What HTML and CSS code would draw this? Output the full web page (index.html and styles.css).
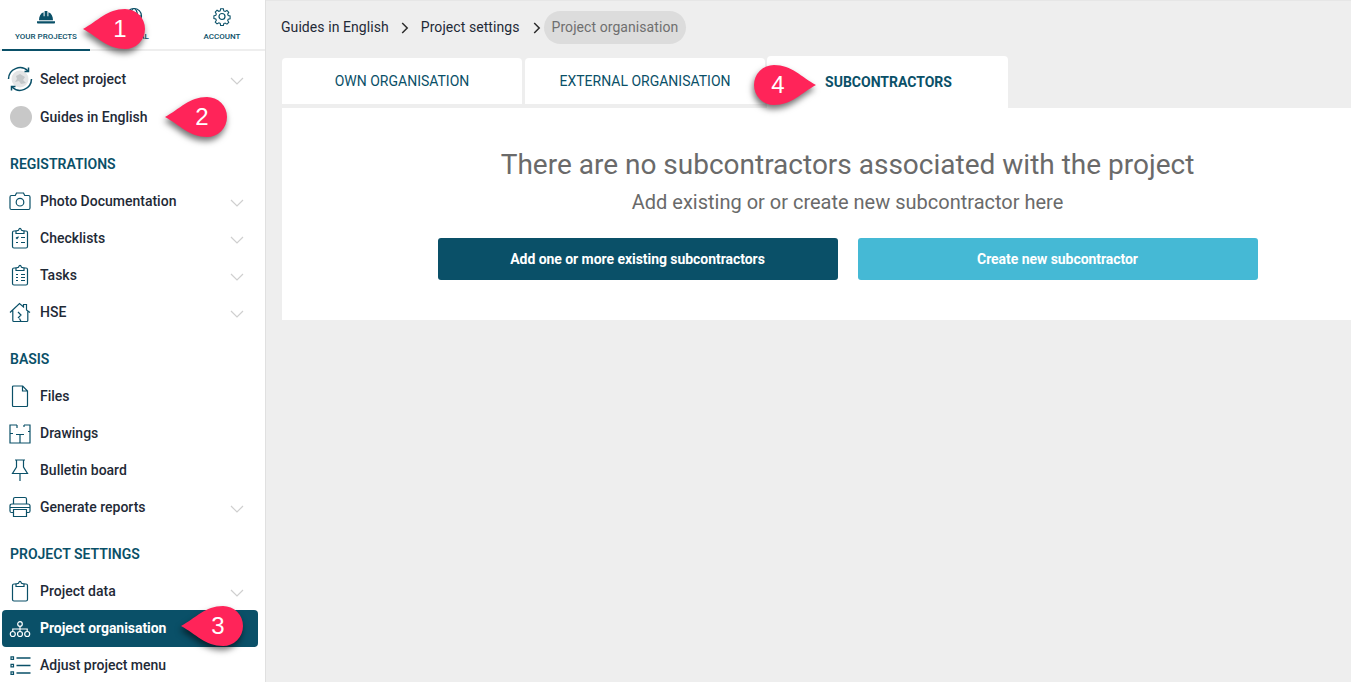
FILE: index.html
```html
<!DOCTYPE html>
<html lang="en">
<head>
<meta charset="utf-8">
<title>Project organisation</title>
<link rel="stylesheet" href="styles.css">
</head>
<body>
<div class="app">
  <aside class="sidebar">
    <div class="top-tabs">
      <div class="top-tab active">
        <svg class="top-icon" viewBox="0 0 20 20"><path class="fill" d="M1 15.2h18v1.6q0 .7-.8.7H1.800q-.8 0-.8-.7zM3 14.200c0-4 1.500-7 4.600-8v4h1V5h2.800v5.200h1v-4c3.100 1 4.600 4 4.600 8z"/></svg>
        <span>YOUR PROJECTS</span>
      </div>
      <div class="top-tab">
        <svg class="top-icon" viewBox="0 0 20 20"><circle class="line" cx="10" cy="10" r="7.500"/><ellipse class="line" cx="10" cy="10" rx="3.500" ry="7.500"/><path class="line" d="M2.500 10h15"/></svg>
        <span>GLOBAL</span>
      </div>
      <div class="top-tab">
        <svg class="top-icon" viewBox="0 0 20 20"><path class="line" d="M8.500 2h3l.5 2.300 1.500.7 2-1.200 2 2.100-1.200 2 .6 1.500 2.100.6v3l-2.100.5-.6 1.500 1.200 2-2 2-2-1.200-1.500.6-.5 2.300h-3L8 18.200l-1.500-.6-2 1.200-2-2 1.200-2-.6-1.500-2.100-.5v-3l2.100-.6.6-1.500-1.200-2 2-2.100 2 1.200L8 4.300z" transform="translate(1 1) scale(.9)"/><circle class="line" cx="10" cy="10.500" r="3"/></svg>
        <span>ACCOUNT</span>
      </div>
    </div>

    <nav class="menu">
      <div class="item item-first">
        <svg class="icon" viewBox="0 0 26 26"><circle class="photo" cx="13" cy="13" r="8.500"/><path class="speck" d="M9 10l4-2 5 3-2 3 3 3-5 1-2-3-4 1 2-3z"/><path class="line thick" d="M1.500 13A11.500 11.500 0 0 1 21 5M24.500 13A11.500 11.500 0 0 1 5 21"/><path class="line thick" d="M21.500 1.500V5.500h-4M4.500 24.500V20.500h4"/></svg>
        <span class="label">Select project</span>
        <svg class="chev" viewBox="0 0 14 8"><path d="M1 1l6 6 6-6"/></svg>
      </div>
      <div class="item">
        <span class="avatar"></span>
        <span class="label">Guides in English</span>
      </div>

      <h2 class="section">REGISTRATIONS</h2>
      <div class="item">
        <svg class="icon" viewBox="0 0 22 22"><path class="line" d="M2.500 5.500h3.800L7.500 3h7l1.200 2.500h3.800q1.500 0 1.500 1.500v11q0 1.500-1.500 1.500h-17Q1 19.500 1 18V7q0-1.500 1.500-1.500z"/><circle class="line" cx="11" cy="12.200" r="3.800"/></svg>
        <span class="label">Photo Documentation</span>
        <svg class="chev" viewBox="0 0 14 8"><path d="M1 1l6 6 6-6"/></svg>
      </div>
      <div class="item">
        <svg class="icon" viewBox="0 0 22 22"><path class="line" d="M7 4H5q-1.500 0-1.500 1.500v14Q3.500 21 5 21h12q1.500 0 1.500-1.500v-14Q18.500 4 17 4h-2"/><path class="line" d="M7 6.500V4l2.500-.8Q11-.5 12.500 3.200L15 4v2.500z"/><path class="line" d="M7 10.500l1 1 1.500-1.800M12 10.500h4M7 15.500h2M12 15.500h4"/></svg>
        <span class="label">Checklists</span>
        <svg class="chev" viewBox="0 0 14 8"><path d="M1 1l6 6 6-6"/></svg>
      </div>
      <div class="item">
        <svg class="icon" viewBox="0 0 22 22"><path class="line" d="M7 4H5q-1.500 0-1.500 1.500v14Q3.500 21 5 21h12q1.500 0 1.500-1.500v-14Q18.500 4 17 4h-2"/><path class="line" d="M7 6.500V4l2.500-.8Q11-.5 12.500 3.200L15 4v2.500z"/><path class="line" d="M7 10.500h2M12 10.500h4M7 13.500h2M12 13.500h4M7 16.500h2M12 16.500h4"/></svg>
        <span class="label">Tasks</span>
        <svg class="chev" viewBox="0 0 14 8"><path d="M1 1l6 6 6-6"/></svg>
      </div>
      <div class="item">
        <svg class="icon" viewBox="0 0 22 22"><path class="line" d="M1 11.500L10.500 2.500l4 3.500V3.500h3V9l3.500 2.500M3.800 9.500v10q0 1 1 1h13q1 0 1-1v-10M9 11l3 3-3 3M10.500 17.500l1.500 3"/></svg>
        <span class="label">HSE</span>
        <svg class="chev" viewBox="0 0 14 8"><path d="M1 1l6 6 6-6"/></svg>
      </div>

      <h2 class="section">BASIS</h2>
      <div class="item">
        <svg class="icon" viewBox="0 0 22 22"><path class="line" d="M4.500 1h9.200L18.500 6v14.500q0 1-1 1h-13q-1 0-1-1V2q0-1 1-1zM13.500 1v5h5"/></svg>
        <span class="label">Files</span>
      </div>
      <div class="item">
        <svg class="icon" viewBox="0 0 22 22"><path class="line" d="M8 3H1v18h20V3h-6M21 9.500h-2M1 11.500h3M7 12.500h8M11 12.500V21M8 3v3M15 3v2"/></svg>
        <span class="label">Drawings</span>
      </div>
      <div class="item">
        <svg class="icon" viewBox="0 0 22 22"><path class="line" d="M6 1h10M7.500 1v7L3.500 14.500h15L14.500 8V1M11 14.500V22"/></svg>
        <span class="label">Bulletin board</span>
      </div>
      <div class="item">
        <svg class="icon" viewBox="0 0 22 22"><path class="line" d="M4.500 8V3q0-1.500 1.500-1.500h10q1.500 0 1.500 1.500v5M4 16.500H2.500Q1 16.500 1 15v-5q0-2 2-2h16q2 0 2 2v5q0 1.500-1.500 1.500H18M4.500 13.500h13v7h-13zM1 11.500h20"/></svg>
        <span class="label">Generate reports</span>
        <svg class="chev" viewBox="0 0 14 8"><path d="M1 1l6 6 6-6"/></svg>
      </div>

      <h2 class="section">PROJECT SETTINGS</h2>
      <div class="item">
        <svg class="icon" viewBox="0 0 22 22"><path class="line" d="M7 4H5q-1.500 0-1.500 1.500v14Q3.500 21 5 21h12q1.500 0 1.500-1.500v-14Q18.500 4 17 4h-2"/><path class="line" d="M7 6.500V4l2.500-.8Q11-.5 12.500 3.200L15 4v2.500z"/></svg>
        <span class="label">Project data</span>
        <svg class="chev" viewBox="0 0 14 8"><path d="M1 1l6 6 6-6"/></svg>
      </div>
      <div class="item selected">
        <svg class="icon" viewBox="0 0 22 22"><circle class="line" cx="11" cy="7" r="2.300"/><circle class="line" cx="3.800" cy="17" r="2.500"/><circle class="line" cx="11" cy="17" r="2.500"/><circle class="line" cx="18.200" cy="17" r="2.500"/><path class="line" d="M11 9.300v5.200M3.800 14.500V12h14.400v2.500"/></svg>
        <span class="label">Project organisation</span>
      </div>
      <div class="item">
        <svg class="icon" viewBox="0 0 22 22"><path class="line" d="M2 2.800h2.500v2.500H2zM2 10.300h2.500v2.500H2zM2 17.800h2.500v2.500H2z"/><path class="line thick" d="M7.500 4h14M7.500 11.500h14M7.500 19h14"/></svg>
        <span class="label">Adjust project menu</span>
      </div>
    </nav>
  </aside>

  <main class="main">
    <div class="crumbs">
      <span class="crumb">Guides in English</span>
      <svg class="sep" viewBox="0 0 8 12"><path d="M1.200 1l5 5-5 5"/></svg>
      <span class="crumb">Project settings</span>
      <svg class="sep sep-last" viewBox="0 0 8 12"><path d="M1.200 1l5 5-5 5"/></svg>
      <span class="crumb current">Project organisation</span>
    </div>

    <div class="tabs">
      <div class="tab">OWN ORGANISATION</div>
      <div class="tab">EXTERNAL ORGANISATION</div>
      <div class="tab tab-active">SUBCONTRACTORS</div>
    </div>

    <section class="card">
      <h1 class="title">There are no subcontractors associated with the project</h1>
      <p class="sub">Add existing or or create new subcontractor here</p>
      <div class="actions">
        <button class="btn btn-dark">Add one or more existing subcontractors</button>
        <button class="btn btn-light">Create new subcontractor</button>
      </div>
    </section>
  </main>
</div>

<div class="callout c1"><svg viewBox="0 0 62 40"><path d="M0 20C15 12 24 0 42 0a20 20 0 0 1 0 40C24 40 15 28 0 20z"/></svg><b>1</b></div>
<div class="callout c2"><svg viewBox="0 0 62 40"><path d="M0 20C15 12 24 0 42 0a20 20 0 0 1 0 40C24 40 15 28 0 20z"/></svg><b>2</b></div>
<div class="callout c3"><svg viewBox="0 0 62 40"><path d="M0 20C15 12 24 0 42 0a20 20 0 0 1 0 40C24 40 15 28 0 20z"/></svg><b>3</b></div>
<div class="callout c4 flip"><svg viewBox="0 0 62 40"><path d="M62 20C47 12 38 0 20 0a20 20 0 0 0 0 40C38 40 47 28 62 20z"/></svg><b>4</b></div>
</body>
</html>
```

FILE: styles.css
```css
* { box-sizing: border-box; }
html, body { margin: 0; height: 100%; overflow: hidden; }
body { font-family: Roboto, "Liberation Sans", sans-serif; font-size: 14px; color: #1f2a37; background: #eeeeee; }

.app { display: flex; height: 682px; }

.sidebar { width: 266px; flex: none; background: #fff; border-right: 1px solid #e0e0e0; padding-left: 2px; overflow: hidden; }

.top-tabs { display: flex; height: 51px; margin-left: -2px; padding-left: 2px; border-bottom: 2px solid #eeeeee; }
.top-tab { width: 88px; height: 51px; padding-top: 6px; display: flex; flex-direction: column; align-items: center; font-size: 8px; font-weight: 500; color: #0a5068; flex: none; }
.top-tab span { margin-top: 5px; line-height: 12px; }
.top-tab.active { border-bottom: 2px solid #0a5068; }
.top-icon { width: 20px; height: 20px; }
.fill { fill: #0a5068; }
.line { fill: none; stroke: #0a5068; stroke-width: 1.200; }
.thick { stroke-width: 1.500; }

.menu { display: flex; flex-direction: column; padding-top: 9px; }
.item { display: flex; align-items: center; height: 37px; width: 256px; padding-left: 7px; border-radius: 4px; flex: none; font-weight: 500; }
.item-first { height: 38px; }
.icon { width: 22px; height: 22px; flex: none; }
.item-first .icon { width: 26px; height: 26px; margin: 0 -2px; }
.label { margin-left: 9px; flex: 1; color: #1f2a37; white-space: nowrap; }
.chev { width: 14px; height: 8px; flex: none; margin: 4px 14px 0 0; }
.chev path { fill: none; stroke: #cfcfcf; stroke-width: 1.200; }
.photo { fill: #e4e5e6; }
.speck { fill: #c4c7c9; }
.avatar { width: 22px; height: 22px; border-radius: 50%; background: #c8c8c8; flex: none; margin-left: 1px; margin-right: -1px; }

.section { margin: 10px 0 0 8px; height: 37px; line-height: 39px; font-size: 14px; font-weight: 600; color: #0a5068; flex: none; }

.selected { background: #0a5068; margin-top: 1px; margin-bottom: -1px; padding-bottom: 2px; }
.selected .label { color: #fff; font-weight: 700; letter-spacing: -.05px; }
.selected .line { stroke: #fff; }

.main { flex: 1; min-width: 0; padding: 11px 0 0 16px; border-top: 1px solid #e6e6e6; }

.crumbs { display: flex; align-items: center; height: 33px; margin-top: -1px; }
.crumb { color: #1f2a37; white-space: nowrap; line-height: 33px; letter-spacing: .07px; }
.crumbs .crumb:first-child { margin-left: -1px; }
.sep { width: 8px; height: 12px; margin: 0 12px; flex: none; }
.sep-last { margin: 0 3px 0 13px; }
.sep path { fill: none; stroke: #2b2b2b; stroke-width: 1.500; }
.current { background: #dcdcdc; color: #6f6f6f; height: 33px; padding: 0 8px; border-radius: 17px; }

.tabs { display: flex; align-items: flex-start; margin-top: 12px; height: 52px; }
.tab { width: 240px; height: 46px; margin-top: 2px; margin-right: 3px; background: #fff; border-radius: 4px 4px 0 0; display: flex; align-items: center; justify-content: center; color: #0a5068; flex: none; }
.tab-active { width: 241px; height: 52px; margin: 0 0 0 -1px; padding-left: 2px; font-weight: 700; }

.card { background: #fff; height: 212px; display: flex; flex-direction: column; align-items: center; padding: 39px 0 0 62px; }
.title { margin: 0; font-size: 28px; line-height: 36px; font-weight: 400; color: #6a6a6a; white-space: nowrap; }
.sub { margin: 6px 0 0; font-size: 20px; line-height: 26px; color: #6a6a6a; }
.actions { display: flex; gap: 20px; margin-top: 23px; }
.btn { width: 400px; height: 42px; border: 0; border-radius: 3px; font: 700 14px Roboto, "Liberation Sans", sans-serif; letter-spacing: -.05px; color: #fff; }
.btn-dark { background: #0a5068; }
.btn-light { background: #45b9d5; }

.callout { position: absolute; width: 62px; height: 40px; }
.callout svg { display: block; width: 62px; height: 40px; overflow: visible; filter: drop-shadow(-1px 4px 3px rgba(0,0,0,.55)); }
.callout path { fill: #ff2459; }
.callout b { position: absolute; top: 0; left: 37px; line-height: 40px; width: 0; display: flex; justify-content: center; font-size: 24px; font-weight: 400; color: #fff; font-family: "Liberation Sans", sans-serif; }
.flip b { left: 24px; }
.c1 { left: 83px; top: 9px; }
.c2 { left: 165px; top: 97px; }
.c3 { left: 181px; top: 606px; }
.c4 { left: 754px; top: 65px; }
```
